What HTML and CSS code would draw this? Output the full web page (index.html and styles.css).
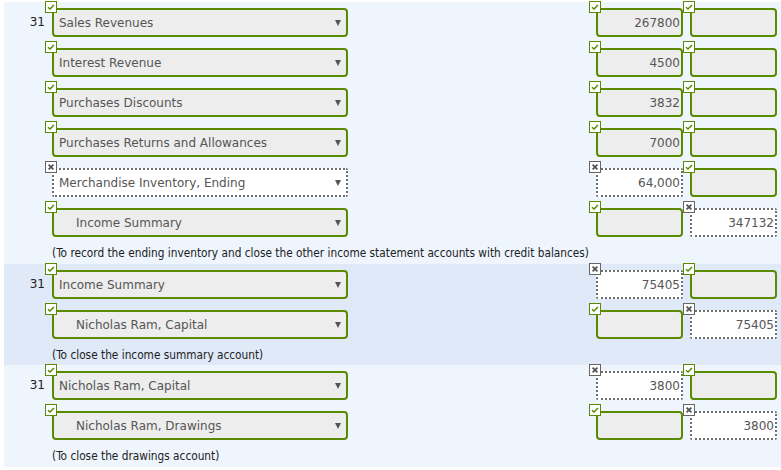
FILE: index.html
```html
<!DOCTYPE html>
<html>
<head>
<meta charset="utf-8">
<link rel="stylesheet" href="styles.css">
</head>
<body>
<div class="sheet">
  <div class="entry light first">
    <div class="row">
      <div class="date">31</div>
      <div class="field acct ok"><svg class="mark" viewBox="0 0 12 12"><rect x="0.5" y="0.5" width="11" height="11" class="ok-box"/><path d="M3 6.2 L5 8 L9 4" class="ok-tick"/></svg><span class="txt">Sales Revenues</span><span class="arrow"></span></div>
      <div class="field amt ok"><svg class="mark" viewBox="0 0 12 12"><rect x="0.5" y="0.5" width="11" height="11" class="ok-box"/><path d="M3 6.2 L5 8 L9 4" class="ok-tick"/></svg>267800</div>
      <div class="field amt ok credit"><svg class="mark" viewBox="0 0 12 12"><rect x="0.5" y="0.5" width="11" height="11" class="ok-box"/><path d="M3 6.2 L5 8 L9 4" class="ok-tick"/></svg></div>
    </div>
    <div class="row">
      <div class="date"></div>
      <div class="field acct ok"><svg class="mark" viewBox="0 0 12 12"><rect x="0.5" y="0.5" width="11" height="11" class="ok-box"/><path d="M3 6.2 L5 8 L9 4" class="ok-tick"/></svg><span class="txt">Interest Revenue</span><span class="arrow"></span></div>
      <div class="field amt ok"><svg class="mark" viewBox="0 0 12 12"><rect x="0.5" y="0.5" width="11" height="11" class="ok-box"/><path d="M3 6.2 L5 8 L9 4" class="ok-tick"/></svg>4500</div>
      <div class="field amt ok credit"><svg class="mark" viewBox="0 0 12 12"><rect x="0.5" y="0.5" width="11" height="11" class="ok-box"/><path d="M3 6.2 L5 8 L9 4" class="ok-tick"/></svg></div>
    </div>
    <div class="row">
      <div class="date"></div>
      <div class="field acct ok"><svg class="mark" viewBox="0 0 12 12"><rect x="0.5" y="0.5" width="11" height="11" class="ok-box"/><path d="M3 6.2 L5 8 L9 4" class="ok-tick"/></svg><span class="txt">Purchases Discounts</span><span class="arrow"></span></div>
      <div class="field amt ok"><svg class="mark" viewBox="0 0 12 12"><rect x="0.5" y="0.5" width="11" height="11" class="ok-box"/><path d="M3 6.2 L5 8 L9 4" class="ok-tick"/></svg>3832</div>
      <div class="field amt ok credit"><svg class="mark" viewBox="0 0 12 12"><rect x="0.5" y="0.5" width="11" height="11" class="ok-box"/><path d="M3 6.2 L5 8 L9 4" class="ok-tick"/></svg></div>
    </div>
    <div class="row">
      <div class="date"></div>
      <div class="field acct ok"><svg class="mark" viewBox="0 0 12 12"><rect x="0.5" y="0.5" width="11" height="11" class="ok-box"/><path d="M3 6.2 L5 8 L9 4" class="ok-tick"/></svg><span class="txt">Purchases Returns and Allowances</span><span class="arrow"></span></div>
      <div class="field amt ok"><svg class="mark" viewBox="0 0 12 12"><rect x="0.5" y="0.5" width="11" height="11" class="ok-box"/><path d="M3 6.2 L5 8 L9 4" class="ok-tick"/></svg>7000</div>
      <div class="field amt ok credit"><svg class="mark" viewBox="0 0 12 12"><rect x="0.5" y="0.5" width="11" height="11" class="ok-box"/><path d="M3 6.2 L5 8 L9 4" class="ok-tick"/></svg></div>
    </div>
    <div class="row">
      <div class="date"></div>
      <div class="field acct bad"><svg class="mark" viewBox="0 0 12 12"><rect x="0.5" y="0.5" width="11" height="11" class="bad-box"/><path d="M3.6 3.6 L8.4 8.4 M8.4 3.6 L3.6 8.4" class="bad-x"/></svg><span class="txt">Merchandise Inventory, Ending</span><span class="arrow"></span></div>
      <div class="field amt bad"><svg class="mark" viewBox="0 0 12 12"><rect x="0.5" y="0.5" width="11" height="11" class="bad-box"/><path d="M3.6 3.6 L8.4 8.4 M8.4 3.6 L3.6 8.4" class="bad-x"/></svg>64,000</div>
      <div class="field amt ok credit"><svg class="mark" viewBox="0 0 12 12"><rect x="0.5" y="0.5" width="11" height="11" class="ok-box"/><path d="M3 6.2 L5 8 L9 4" class="ok-tick"/></svg></div>
    </div>
    <div class="row">
      <div class="date"></div>
      <div class="field acct ok indent"><svg class="mark" viewBox="0 0 12 12"><rect x="0.5" y="0.5" width="11" height="11" class="ok-box"/><path d="M3 6.2 L5 8 L9 4" class="ok-tick"/></svg><span class="txt">Income Summary</span><span class="arrow"></span></div>
      <div class="field amt ok"><svg class="mark" viewBox="0 0 12 12"><rect x="0.5" y="0.5" width="11" height="11" class="ok-box"/><path d="M3 6.2 L5 8 L9 4" class="ok-tick"/></svg></div>
      <div class="field amt bad credit"><svg class="mark" viewBox="0 0 12 12"><rect x="0.5" y="0.5" width="11" height="11" class="bad-box"/><path d="M3.6 3.6 L8.4 8.4 M8.4 3.6 L3.6 8.4" class="bad-x"/></svg>347132</div>
    </div>
    <div class="note">(To record the ending inventory and close the other income statement accounts with credit balances)</div>
  </div>

  <div class="entry dark">
    <div class="row">
      <div class="date">31</div>
      <div class="field acct ok"><svg class="mark" viewBox="0 0 12 12"><rect x="0.5" y="0.5" width="11" height="11" class="ok-box"/><path d="M3 6.2 L5 8 L9 4" class="ok-tick"/></svg><span class="txt">Income Summary</span><span class="arrow"></span></div>
      <div class="field amt bad"><svg class="mark" viewBox="0 0 12 12"><rect x="0.5" y="0.5" width="11" height="11" class="bad-box"/><path d="M3.6 3.6 L8.4 8.4 M8.4 3.6 L3.6 8.4" class="bad-x"/></svg>75405</div>
      <div class="field amt ok credit"><svg class="mark" viewBox="0 0 12 12"><rect x="0.5" y="0.5" width="11" height="11" class="ok-box"/><path d="M3 6.2 L5 8 L9 4" class="ok-tick"/></svg></div>
    </div>
    <div class="row">
      <div class="date"></div>
      <div class="field acct ok indent"><svg class="mark" viewBox="0 0 12 12"><rect x="0.5" y="0.5" width="11" height="11" class="ok-box"/><path d="M3 6.2 L5 8 L9 4" class="ok-tick"/></svg><span class="txt">Nicholas Ram, Capital</span><span class="arrow"></span></div>
      <div class="field amt ok"><svg class="mark" viewBox="0 0 12 12"><rect x="0.5" y="0.5" width="11" height="11" class="ok-box"/><path d="M3 6.2 L5 8 L9 4" class="ok-tick"/></svg></div>
      <div class="field amt bad credit"><svg class="mark" viewBox="0 0 12 12"><rect x="0.5" y="0.5" width="11" height="11" class="bad-box"/><path d="M3.6 3.6 L8.4 8.4 M8.4 3.6 L3.6 8.4" class="bad-x"/></svg>75405</div>
    </div>
    <div class="note">(To close the income summary account)</div>
  </div>

  <div class="entry light">
    <div class="row">
      <div class="date">31</div>
      <div class="field acct ok"><svg class="mark" viewBox="0 0 12 12"><rect x="0.5" y="0.5" width="11" height="11" class="ok-box"/><path d="M3 6.2 L5 8 L9 4" class="ok-tick"/></svg><span class="txt">Nicholas Ram, Capital</span><span class="arrow"></span></div>
      <div class="field amt bad"><svg class="mark" viewBox="0 0 12 12"><rect x="0.5" y="0.5" width="11" height="11" class="bad-box"/><path d="M3.6 3.6 L8.4 8.4 M8.4 3.6 L3.6 8.4" class="bad-x"/></svg>3800</div>
      <div class="field amt ok credit"><svg class="mark" viewBox="0 0 12 12"><rect x="0.5" y="0.5" width="11" height="11" class="ok-box"/><path d="M3 6.2 L5 8 L9 4" class="ok-tick"/></svg></div>
    </div>
    <div class="row">
      <div class="date"></div>
      <div class="field acct ok indent"><svg class="mark" viewBox="0 0 12 12"><rect x="0.5" y="0.5" width="11" height="11" class="ok-box"/><path d="M3 6.2 L5 8 L9 4" class="ok-tick"/></svg><span class="txt">Nicholas Ram, Drawings</span><span class="arrow"></span></div>
      <div class="field amt ok"><svg class="mark" viewBox="0 0 12 12"><rect x="0.5" y="0.5" width="11" height="11" class="ok-box"/><path d="M3 6.2 L5 8 L9 4" class="ok-tick"/></svg></div>
      <div class="field amt bad credit"><svg class="mark" viewBox="0 0 12 12"><rect x="0.5" y="0.5" width="11" height="11" class="bad-box"/><path d="M3.6 3.6 L8.4 8.4 M8.4 3.6 L3.6 8.4" class="bad-x"/></svg>3800</div>
    </div>
    <div class="note">(To close the drawings account)</div>
  </div>
</div>
</body>
</html>
```

FILE: styles.css
```css
html, body {
  margin: 0;
  padding: 0;
  background: #ffffff;
}

body {
  font-family: "DejaVu Sans", Verdana, sans-serif;
  font-size: 12px;
  color: #555555;
}

.sheet {
  padding-top: 2px;
  padding-left: 4px;
}

.entry.light {
  background: #eef5fd;
}

.entry.dark {
  background: #dfe9f8;
}

.row {
  display: flex;
  align-items: flex-start;
  height: 40px;
  padding-top: 6px;
  box-sizing: border-box;
}

.date {
  width: 41px;
  padding-right: 7px;
  text-align: right;
  line-height: 29px;
  color: #222222;
}

.field {
  position: relative;
  height: 29px;
  box-sizing: border-box;
  display: flex;
  align-items: center;
  border-radius: 4px;
}

.field.ok {
  border: 2px solid #5a8a00;
  background: #ededed;
}

.field.bad {
  border: 2px dotted #6e6e6e;
  background: #ffffff;
  border-radius: 2px;
}

.acct {
  width: 296px;
  padding-left: 5px;
  padding-right: 4px;
}

.acct.indent {
  padding-left: 22px;
}

.acct .txt {
  flex: 1;
  white-space: nowrap;
}

.arrow {
  width: 0;
  height: 0;
  border-left: 3.5px solid transparent;
  border-right: 3.5px solid transparent;
  border-top: 6px solid #555555;
  margin-right: 1px;
}

.amt {
  width: 87px;
  justify-content: flex-end;
  padding-right: 1px;
}

.acct + .amt {
  margin-left: 248px;
}

.amt.credit {
  margin-left: 7px;
}

.mark {
  position: absolute;
  left: -9px;
  top: -9px;
  width: 12px;
  height: 12px;
}

.ok-box {
  fill: #ffffff;
  stroke: #5a8a00;
  stroke-width: 1;
}

.ok-tick {
  fill: none;
  stroke: #5a8a00;
  stroke-width: 1.5;
}

.bad-box {
  fill: #ffffff;
  stroke: #666666;
  stroke-width: 1;
}

.bad-x {
  fill: none;
  stroke: #555555;
  stroke-width: 1.8;
}

.note {
  height: 22px;
  padding-left: 48px;
  line-height: 18px;
  padding-top: 2px;
  box-sizing: border-box;
  color: #222222;
  font-family: "DejaVu Sans Condensed", "DejaVu Sans", sans-serif;
  font-size: 11.75px;
}

.entry.dark .note {
  height: 21px;
}
```
